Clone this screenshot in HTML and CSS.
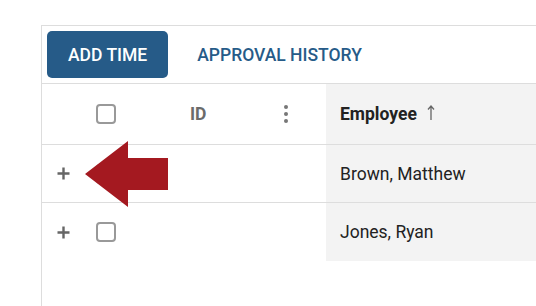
FILE: index.html
```html
<!DOCTYPE html>
<html lang="en">
<head>
  <meta charset="UTF-8" />
  <title>Timesheets</title>
  <link rel="stylesheet" href="styles.css">
</head>
<body>

  <div class="panel">
    <div class="toolbar">
      <button class="btn btn-primary">ADD TIME</button>
      <button class="btn btn-link">APPROVAL HISTORY</button>
    </div>

    <div class="grid">
      <div class="row head">
        <div class="cell expand"></div>
        <div class="cell select"><span class="check"></span></div>
        <div class="cell id">ID
          <span class="kebab"><i></i><i></i><i></i></span>
        </div>
        <div class="cell name">Employee
          <svg class="sort" width="8" height="15" viewBox="0 0 8 15"><path d="M4 1v14M1 4.5L4 1l3 3.5" fill="none" stroke="#666" stroke-width="1.3"/></svg>
        </div>
      </div>

      <div class="row">
        <div class="cell expand"><svg class="plus" width="13" height="13" viewBox="0 0 13 13"><path d="M6.5 0.5v12M0.5 6.5h12" stroke="#666" stroke-width="2.4"/></svg></div>
        <div class="cell select"><span class="check"></span></div>
        <div class="cell id"></div>
        <div class="cell name">Brown, Matthew</div>
      </div>

      <div class="row">
        <div class="cell expand"><svg class="plus" width="13" height="13" viewBox="0 0 13 13"><path d="M6.5 0.5v12M0.5 6.5h12" stroke="#666" stroke-width="2.4"/></svg></div>
        <div class="cell select"><span class="check"></span></div>
        <div class="cell id"></div>
        <div class="cell name">Jones, Ryan</div>
      </div>

      <!-- flecha de anotación -->
      <svg class="callout" width="86" height="68" viewBox="0 0 86 68">
        <polygon points="1,34 44,1 44,18 84,18 84,50 44,50 44,67" fill="#a41920"/>
      </svg>
    </div>
  </div>

</body>
</html>
```

FILE: styles.css
```css
* {
  box-sizing: border-box;
  margin: 0;
  padding: 0;
}
body {
  font-family: Roboto, "Liberation Sans", sans-serif;
  background: #fff;
  color: #222;
  font-size: 17.5px;
}

.panel {
  margin: 25px 0 0 41px;
  min-height: 281px;
  border-top: 1px solid #ddd;
  border-left: 1px solid #ddd;
}

/* Toolbar */
.toolbar {
  display: flex;
  gap: 8px;
  padding: 5px;
  border-bottom: 1px solid #ddd;
}
.btn {
  font-family: inherit;
  font-size: 17.5px;
  font-weight: 500;
  height: 47px;
  padding: 0 21px;
  border: none;
  border-radius: 5px;
  cursor: pointer;
}
.btn-primary {
  background: #265b88;
  color: #fff;
}
.btn-link {
  background: none;
  color: #265b88;
}

/* Grid */
.grid {
  position: relative;
}
.row {
  display: grid;
  grid-template-columns: 41px 93px 150px 1fr;
  height: 58px;
  border-bottom: 1px solid #ddd;
}
.row:last-of-type {
  border-bottom: none;
}
.row.head {
  height: 61px;
}
.cell {
  display: flex;
  align-items: center;
}
.expand {
  justify-content: center;
  padding-left: 1px;
}
.select {
  padding-left: 13px;
}
.check {
  width: 20px;
  height: 20px;
  border: 2px solid #999;
  border-radius: 4px;
}
.id {
  padding-left: 14px;
  font-weight: 700;
  color: #6b6b6b;
  justify-content: space-between;
  padding-right: 38px;
}
.kebab {
  display: flex;
  flex-direction: column;
  gap: 3px;
}
.kebab i {
  width: 4px;
  height: 4px;
  border-radius: 50%;
  background: #777;
}
.name {
  background: #f3f3f3;
  padding-left: 14px;
  gap: 10px;
}
.head .name {
  font-weight: 700;
}
.sort {
  margin-top: -4px;
}

.callout {
  position: absolute;
  left: 42px;
  top: 56px;
}
```
